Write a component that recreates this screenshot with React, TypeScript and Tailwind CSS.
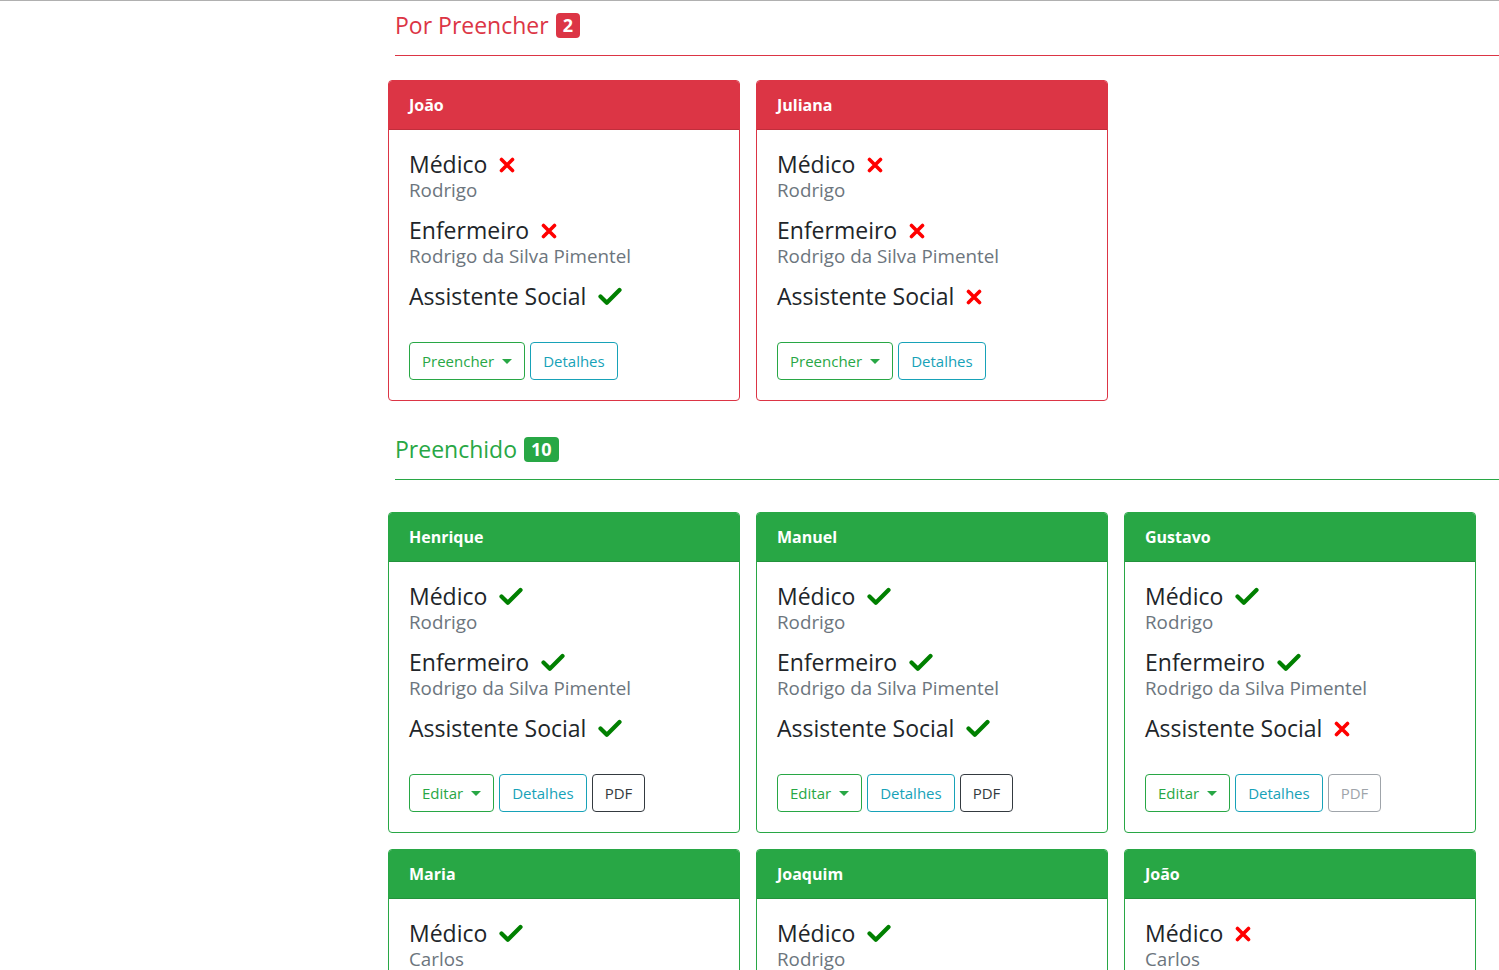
import React from "react";

type Role = { title: string; name?: string; ok: boolean };
type Card = { patient: string; roles: Role[]; pdf?: "dark" | "disabled" };

const pending: Card[] = [
  {
    patient: "João",
    roles: [
      { title: "Médico", name: "Rodrigo", ok: false },
      { title: "Enfermeiro", name: "Rodrigo da Silva Pimentel", ok: false },
      { title: "Assistente Social", ok: true },
    ],
  },
  {
    patient: "Juliana",
    roles: [
      { title: "Médico", name: "Rodrigo", ok: false },
      { title: "Enfermeiro", name: "Rodrigo da Silva Pimentel", ok: false },
      { title: "Assistente Social", ok: false },
    ],
  },
];

const filled: Card[] = [
  {
    patient: "Henrique",
    pdf: "dark",
    roles: [
      { title: "Médico", name: "Rodrigo", ok: true },
      { title: "Enfermeiro", name: "Rodrigo da Silva Pimentel", ok: true },
      { title: "Assistente Social", ok: true },
    ],
  },
  {
    patient: "Manuel",
    pdf: "dark",
    roles: [
      { title: "Médico", name: "Rodrigo", ok: true },
      { title: "Enfermeiro", name: "Rodrigo da Silva Pimentel", ok: true },
      { title: "Assistente Social", ok: true },
    ],
  },
  {
    patient: "Gustavo",
    pdf: "disabled",
    roles: [
      { title: "Médico", name: "Rodrigo", ok: true },
      { title: "Enfermeiro", name: "Rodrigo da Silva Pimentel", ok: true },
      { title: "Assistente Social", ok: false },
    ],
  },
  {
    patient: "Maria",
    pdf: "dark",
    roles: [
      { title: "Médico", name: "Carlos", ok: true },
      { title: "Enfermeiro", name: "Rodrigo da Silva Pimentel", ok: true },
      { title: "Assistente Social", ok: true },
    ],
  },
  {
    patient: "Joaquim",
    pdf: "dark",
    roles: [
      { title: "Médico", name: "Rodrigo", ok: true },
      { title: "Enfermeiro", name: "Rodrigo da Silva Pimentel", ok: true },
      { title: "Assistente Social", ok: true },
    ],
  },
  {
    patient: "João",
    pdf: "disabled",
    roles: [
      { title: "Médico", name: "Carlos", ok: false },
      { title: "Enfermeiro", name: "Rodrigo da Silva Pimentel", ok: true },
      { title: "Assistente Social", ok: true },
    ],
  },
];

function Cross() {
  return (
    <svg width="16" height="16" viewBox="0 0 16 16" className="ml-3 shrink-0">
      <path d="M2.5 2.5 L13.5 13.5 M13.5 2.5 L2.5 13.5" stroke="#ff0000" strokeWidth="3.6" strokeLinecap="round" fill="none" />
    </svg>
  );
}

function Check() {
  return (
    <svg width="24" height="19" viewBox="0 0 24 19" className="ml-3 shrink-0">
      <path d="M2.5 9.5 L8.8 15.8 L21.5 3" stroke="#008000" strokeWidth="4.2" strokeLinecap="round" strokeLinejoin="round" fill="none" />
    </svg>
  );
}

function Caret() {
  return <span className="inline-block ml-[8px] w-0 h-0 border-t-[5px] border-x-[5px] border-x-transparent border-t-current"></span>;
}

function PatientCard({ card, done }: { card: Card; done: boolean }) {
  const border = done ? "border-[#28a745]" : "border-[#dc3545]";
  const head = done ? "bg-[#28a745]" : "bg-[#dc3545]";
  return (
    <div className={`border ${border} rounded-[4px] overflow-hidden bg-white`}>
      <div className={`${head} text-white font-bold text-[16px] leading-[24px] px-5 py-3 border-b border-black/[0.125]`}>
        {card.patient}
      </div>
      <div className="p-5">
        <div className="flex flex-col gap-[15px]">
          {card.roles.map((r) => (
            <div key={r.title}>
              <div className="flex items-center text-[23px] font-medium leading-[29px] text-[#212529]">
                {r.title}
                {r.ok ? <Check /> : <Cross />}
              </div>
              {r.name && <div className="text-[18.8px] font-medium leading-[22px] text-[#6c757d]">{r.name}</div>}
            </div>
          ))}
        </div>
        <div className="mt-[31px] flex gap-[5px] text-[15px]">
          <button className="h-[38px] px-3 border border-[#28a745] text-[#28a745] rounded-[4px] flex items-center">
            {done ? "Editar" : "Preencher"}
            <Caret />
          </button>
          <button className="h-[38px] px-3 border border-[#17a2b8] text-[#17a2b8] rounded-[4px]">Detalhes</button>
          {card.pdf === "dark" && (
            <button className="h-[38px] px-3 border border-[#343a40] text-[#343a40] rounded-[4px]">PDF</button>
          )}
          {card.pdf === "disabled" && (
            <button className="h-[38px] px-3 border border-[#6c757d] text-[#6c757d] rounded-[4px] opacity-65">PDF</button>
          )}
        </div>
      </div>
    </div>
  );
}

function SectionTitle({ label, count, done }: { label: string; count: number; done: boolean }) {
  const color = done ? "text-[#28a745]" : "text-[#dc3545]";
  const badge = done ? "bg-[#28a745]" : "bg-[#dc3545]";
  const line = done ? "border-[#28a745]" : "border-[#dc3545]";
  return (
    <>
      <div className={`h-[30px] flex items-center gap-[7px] pl-[7px] text-[23px] font-medium ${color}`}>
        <span>{label}</span>
        <span className={`${badge} text-white font-bold text-[18px] leading-[25px] h-[25px] px-[7px] rounded-[4px]`}>{count}</span>
      </div>
      <div className={`ml-[7px] mt-[15px] border-t ${line}`}></div>
    </>
  );
}

export default function App() {
  return (
    <div className="min-h-screen bg-white border-t border-[#b0b0b0] flex font-['Open_Sans','Noto_Sans',sans-serif] overflow-hidden">
      <aside className="w-[388px] shrink-0"></aside>
      <main className="flex-1 min-w-0">
        <div className="mt-[9px]">
          <SectionTitle label="Por Preencher" count={2} done={false} />
        </div>
        <div className="mt-6 grid grid-cols-[repeat(3,352px)] gap-4">
          {pending.map((c) => (
            <PatientCard key={c.patient} card={c} done={false} />
          ))}
        </div>
        <div className="mt-[33px]">
          <SectionTitle label="Preenchido" count={10} done={true} />
        </div>
        <div className="mt-8 grid grid-cols-[repeat(3,352px)] gap-4 pb-8">
          {filled.map((c, i) => (
            <PatientCard key={c.patient + i} card={c} done={true} />
          ))}
        </div>
      </main>
    </div>
  );
}
